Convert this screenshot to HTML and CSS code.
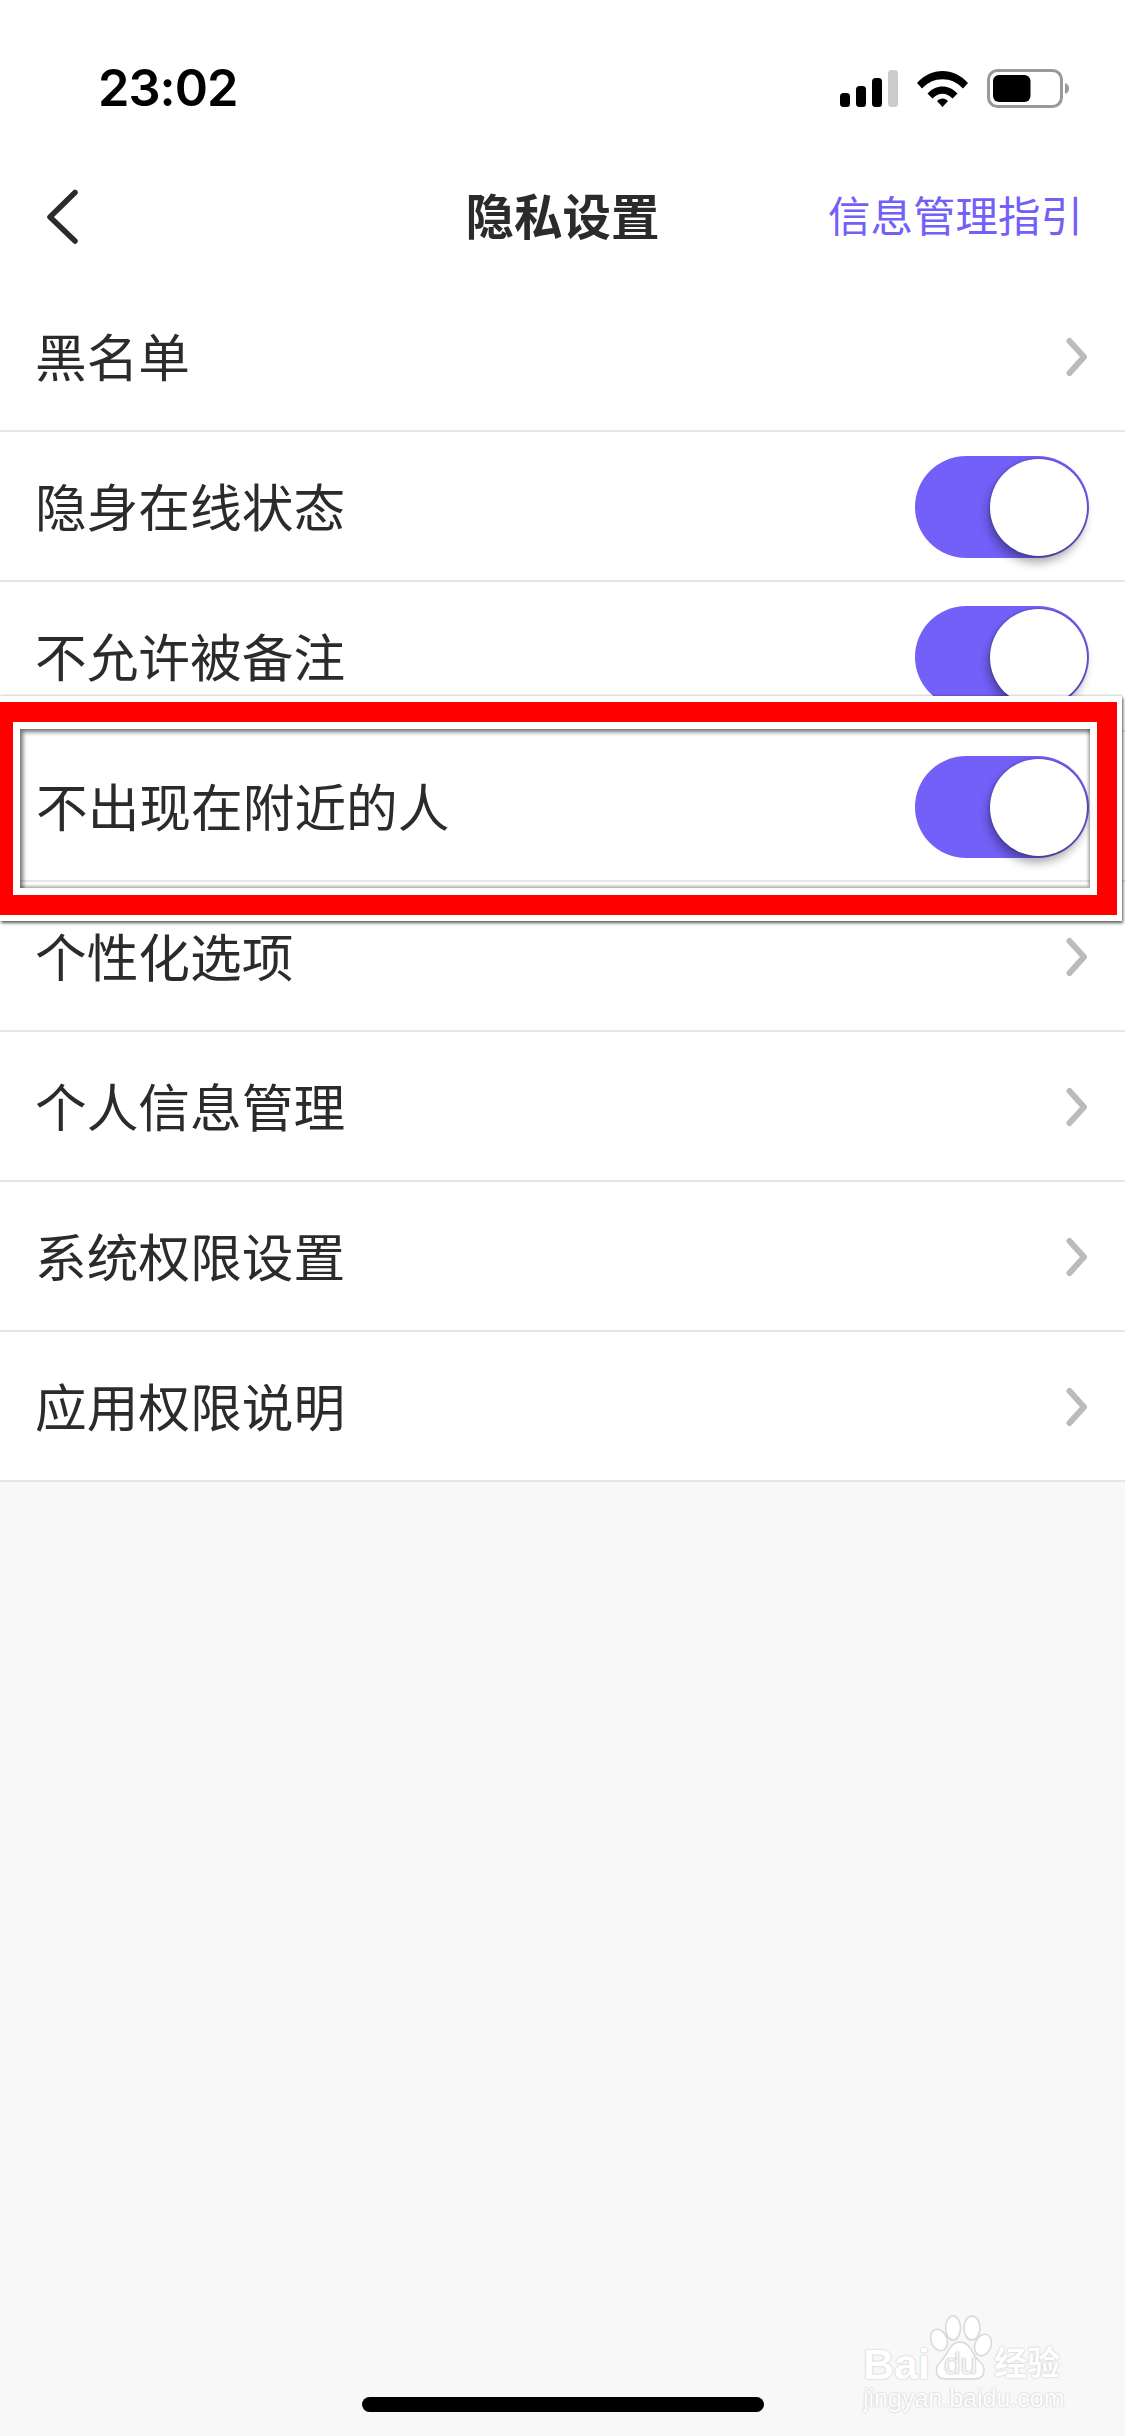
FILE: index.html
```html
<!DOCTYPE html>
<html lang="zh-CN">
<head>
<meta charset="utf-8">
<title>隐私设置</title>
<link rel="stylesheet" href="styles.css">
</head>
<body>
<div class="screen">
  <header class="status">
    <span class="time">23:02</span>
    <svg class="status-icons" width="229" height="39" viewBox="0 0 229 39">
      <rect x="0" y="24" width="10" height="14" rx="3.5" fill="#000"/>
      <rect x="16" y="17" width="10" height="21" rx="3.5" fill="#000"/>
      <rect x="32" y="9" width="10" height="29" rx="3.5" fill="#000"/>
      <rect x="48" y="1" width="10" height="37" rx="3.5" fill="#ccc"/>
      <path d="M77 14 C91 -2 114 -2 128 14 L123 19.500 C112 7 93 7 82 19.500 Z" fill="#000"/>
      <path d="M87.500 24.500 C96 15 109 15 117.500 24.500 L112.500 29.500 C106.500 23 98.500 23 92.500 29.500 Z" fill="#000"/>
      <path d="M97 32 C100 28.500 105 28.500 108 32 L102.500 38 Z" fill="#000"/>
      <rect x="148.500" y="1.500" width="73" height="36" rx="9" fill="none" stroke="#999" stroke-width="3"/>
      <rect x="153" y="6" width="37.500" height="27" rx="6" fill="#000"/>
      <path d="M225 14 C228 15 229 17 229 19.500 C229 22 228 24 225 25 Z" fill="#999"/>
    </svg>
  </header>
  <nav class="nav">
    <svg class="back" width="34" height="58" viewBox="0 0 34 58"><path d="M30 4.500 L5 29 L30 53" fill="none" stroke="#2b2b2b" stroke-width="5.500" stroke-linecap="round" stroke-linejoin="round"/></svg>
    <h1 class="nav-title">隐私设置</h1>
    <a class="nav-link">信息管理指引</a>
  </nav>
  <main class="list">
    <div class="row"><span class="label">黑名单</span><svg class="chev" width="26" height="40" viewBox="0 0 26 40"><path d="M6.500 4 L21 20 L6.500 36" fill="none" stroke="#bbb" stroke-width="6" stroke-linecap="round" stroke-linejoin="round"/></svg></div>
    <div class="row"><span class="label">隐身在线状态</span><span class="toggle"><span class="knob"></span></span></div>
    <div class="row"><span class="label">不允许被备注</span><span class="toggle"><span class="knob"></span></span></div>
    <div class="row"><span class="label">不出现在附近的人</span><span class="toggle"><span class="knob"></span></span></div>
    <div class="row"><span class="label">个性化选项</span><svg class="chev" width="26" height="40" viewBox="0 0 26 40"><path d="M6.500 4 L21 20 L6.500 36" fill="none" stroke="#bbb" stroke-width="6" stroke-linecap="round" stroke-linejoin="round"/></svg></div>
    <div class="row"><span class="label">个人信息管理</span><svg class="chev" width="26" height="40" viewBox="0 0 26 40"><path d="M6.500 4 L21 20 L6.500 36" fill="none" stroke="#bbb" stroke-width="6" stroke-linecap="round" stroke-linejoin="round"/></svg></div>
    <div class="row"><span class="label">系统权限设置</span><svg class="chev" width="26" height="40" viewBox="0 0 26 40"><path d="M6.500 4 L21 20 L6.500 36" fill="none" stroke="#bbb" stroke-width="6" stroke-linecap="round" stroke-linejoin="round"/></svg></div>
    <div class="row"><span class="label">应用权限说明</span><svg class="chev" width="26" height="40" viewBox="0 0 26 40"><path d="M6.500 4 L21 20 L6.500 36" fill="none" stroke="#bbb" stroke-width="6" stroke-linecap="round" stroke-linejoin="round"/></svg></div>
  </main>

  <aside class="callout">
    <div class="callout-red">
      <div class="callout-shot">
        <div class="row row-shot"><span class="label">不出现在附近的人</span><span class="toggle"><span class="knob"></span></span></div>
      </div>
    </div>
  </aside>

  <div class="watermark">
    <div class="wm-brand">
      <span class="wm-bai">Bai</span>
      <span class="wm-paw">
        <svg class="wm-paw-art" width="62" height="71" viewBox="70 0 62 71">
          <g fill="#fff" stroke="#d8d8d8" stroke-width="1.500">
            <ellipse cx="79" cy="30" rx="8" ry="11" transform="rotate(-20 79 30)"/>
            <ellipse cx="93" cy="18" rx="7.500" ry="12"/>
            <ellipse cx="112" cy="18" rx="8" ry="12"/>
            <ellipse cx="123" cy="35" rx="8" ry="11" transform="rotate(20 123 35)"/>
            <path d="M100 32 C90 32 88 44 82 50 C74 57 74 69 86 69 L114 69 C126 69 127 57 118 50 C112 44 110 32 100 32 Z"/>
          </g>
        </svg>
        <span class="wm-du">du</span>
      </span>
      <span class="wm-cn">经验</span>
    </div>
    <div class="wm-url">jingyan.baidu.com</div>
  </div>

  <div class="home-bar"></div>
</div>
</body>
</html>
```
FILE: styles.css
```css
* { box-sizing: border-box; }
html, body { margin: 0; padding: 0; }
body {
  width: 1125px;
  height: 2436px;
  overflow: hidden;
  font-family: "Noto Sans CJK SC", "Noto Sans", sans-serif;
}
.screen {
  position: relative;
  width: 1125px;
  height: 2436px;
  background: #f8f8f8;
  overflow: hidden;
}
.status {
  height: 154px;
  padding: 22px 56px 0 98px;
  background: #fff;
  display: flex;
  align-items: center;
  justify-content: space-between;
}
.time {
  font-family: Inter, "Liberation Sans", sans-serif;
  font-weight: 600;
  font-size: 50.500px;
  letter-spacing: -1px;
  line-height: 1;
  color: #000;
}
.status-icons { display: block; }
.nav {
  height: 126px;
  padding: 0 42px 0 45px;
  background: #fff;
  display: grid;
  grid-template-columns: 1fr auto 1fr;
  align-items: center;
}
.back { display: block; }
.nav-title {
  margin: 0 3px 6px 0;
  font-size: 48.500px;
  font-weight: 700;
  line-height: 1;
  color: #2b2b2b;
}
.nav-link {
  justify-self: end;
  margin-bottom: 6px;
  font-size: 42.500px;
  line-height: 1;
  color: #7260f8;
}
.list {
  padding-top: 2px;
  background: #fff;
}
.row {
  height: 150px;
  padding: 2px 36px 0 35px;
  border-bottom: 2px solid #e6e6e6;
  display: flex;
  align-items: center;
  justify-content: space-between;
}
.label {
  padding-bottom: 5px;
  font-size: 51.700px;
  line-height: 1;
  color: #2b2b2b;
}
.chev { display: block; }
.toggle {
  width: 174px;
  height: 102px;
  padding-right: 2px;
  border-radius: 51px;
  background: #7260f8;
  display: flex;
  align-items: center;
  justify-content: flex-end;
}
.knob {
  width: 97px;
  height: 97px;
  border-radius: 50%;
  background: #fff;
  box-shadow: 0 0 3px rgba(0, 0, 0, .35), -2px 7px 10px rgba(0, 0, 0, .32);
}
.callout {
  position: absolute;
  left: 0;
  top: 696px;
  width: 1122px;
  height: 225px;
  padding: 6px 5px 6px 0;
  background: #fff;
  box-shadow: 1px 2px 3px rgba(0, 0, 0, .65), 0 -1px 2px rgba(0, 0, 0, .15);
}
.callout-red {
  height: 213px;
  padding: 7px;
  border: 20px solid #f00;
  border-left-width: 13px;
  background: #fff;
}
.callout-shot {
  position: relative;
  height: 159px;
  padding-top: 3px;
  background: #fff;
}
.callout-shot::after {
  content: "";
  position: absolute;
  inset: 0;
  box-shadow: inset 3px 3px 4px rgba(0, 0, 0, .55), inset -2px -2px 3px rgba(0, 0, 0, .3);
}
.row-shot {
  padding: 2px 1px 0 16px;
}
.watermark {
  position: absolute;
  left: 863px;
  top: 2310px;
  width: 205px;
  display: flex;
  flex-direction: column;
  color: #fff;
  font-family: "Liberation Sans", sans-serif;
  text-shadow: 0 0 2px #b4b4b4;
}
.wm-brand {
  height: 71px;
  display: flex;
  align-items: flex-end;
}
.wm-bai {
  font-size: 43px;
  font-weight: 700;
  line-height: 34px;
}
.wm-paw {
  position: relative;
  flex: none;
  width: 62px;
  height: 71px;
}
.wm-paw-art { display: block; }
.wm-du {
  position: absolute;
  left: 14px;
  top: 39px;
  font-size: 30px;
  line-height: 30px;
  color: #f4f4f4;
  text-shadow: 0 0 1.500px #8c8c8c;
}
.wm-cn {
  margin: 0 0 3px 2px;
  font-family: "Noto Sans CJK SC", sans-serif;
  font-size: 33px;
  font-weight: 700;
  line-height: 33px;
}
.wm-url {
  margin-top: 5px;
  font-size: 25px;
  line-height: 25px;
  white-space: nowrap;
}
.home-bar {
  position: absolute;
  left: 362px;
  top: 2397px;
  width: 402px;
  height: 15px;
  border-radius: 8px;
  background: #000;
}
```
